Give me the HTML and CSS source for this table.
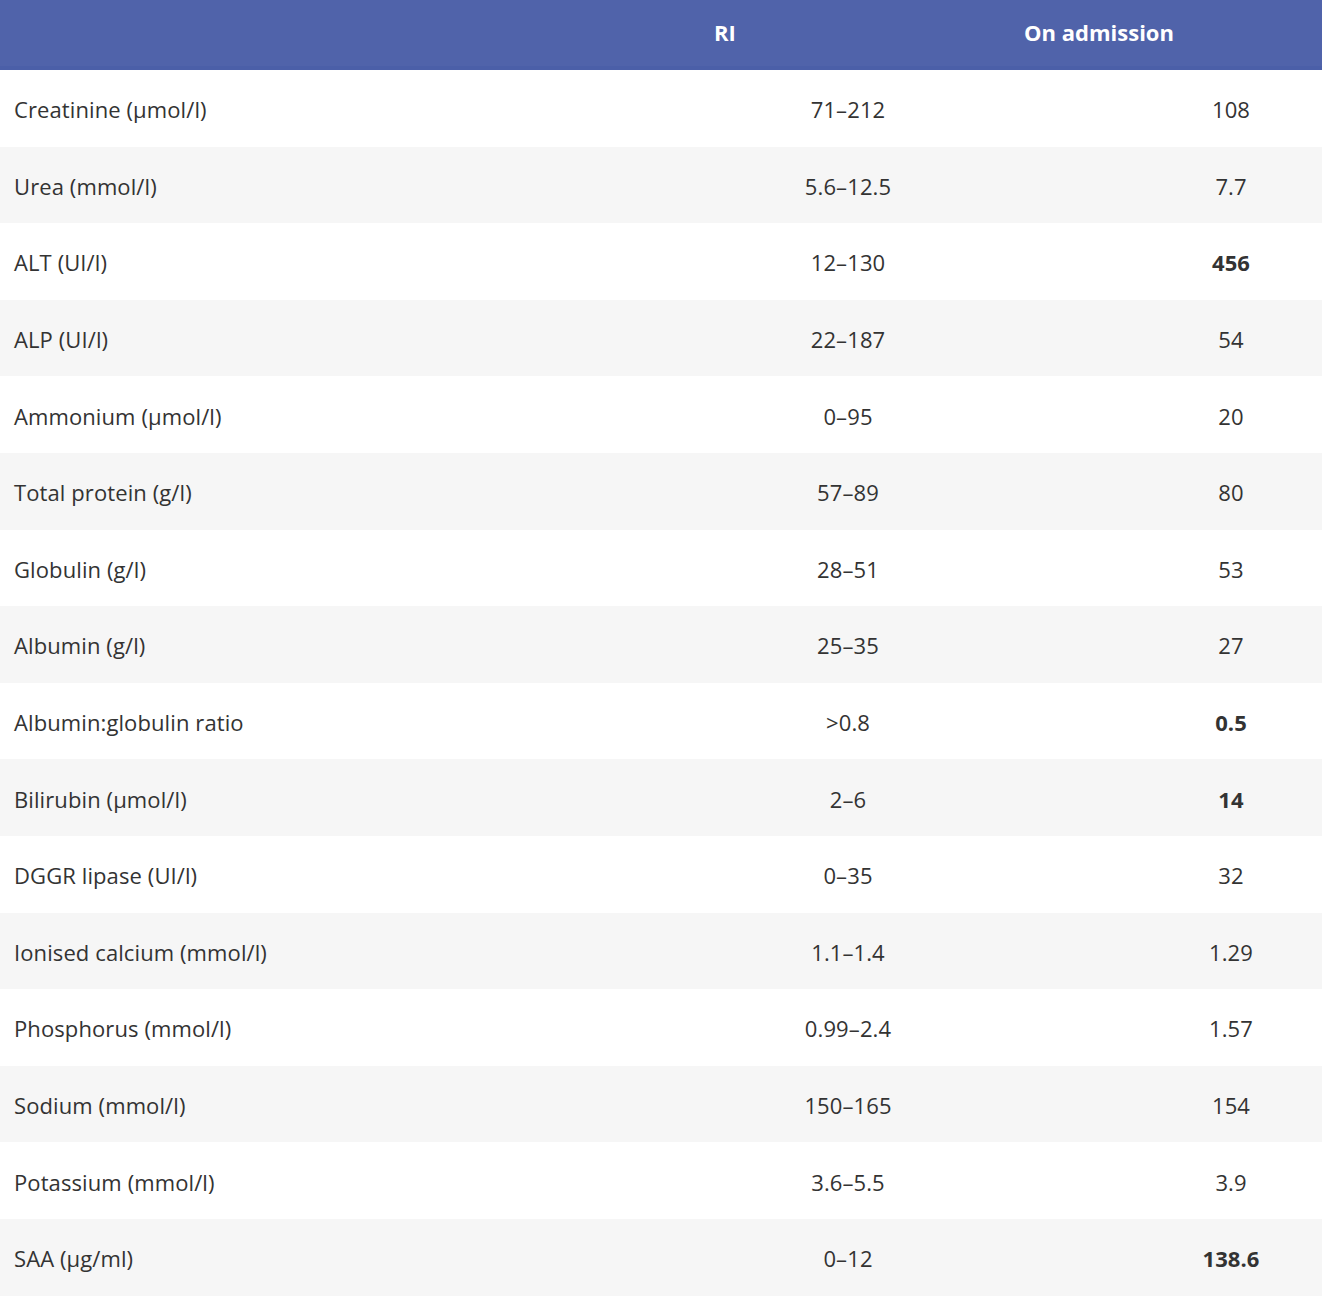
FILE: index.html
```html
<!DOCTYPE html>
<html lang="en">
<head>
<meta charset="utf-8">
<title>Biochemistry</title>
<link rel="stylesheet" href="styles.css">
</head>
<body>
<div class="table">
  <div class="head">
    <div class="hcell"></div>
    <div class="hcell">RI</div>
    <div class="hcell hlast">On admission</div>
  </div>
  <div class="row"><div class="name">Creatinine (μmol/l)</div><div class="val">71–212</div><div class="val">108</div></div>
  <div class="row"><div class="name">Urea (mmol/l)</div><div class="val">5.6–12.5</div><div class="val">7.7</div></div>
  <div class="row"><div class="name">ALT (UI/l)</div><div class="val">12–130</div><div class="val b">456</div></div>
  <div class="row"><div class="name">ALP (UI/l)</div><div class="val">22–187</div><div class="val">54</div></div>
  <div class="row"><div class="name">Ammonium (μmol/l)</div><div class="val">0–95</div><div class="val">20</div></div>
  <div class="row"><div class="name">Total protein (g/l)</div><div class="val">57–89</div><div class="val">80</div></div>
  <div class="row"><div class="name">Globulin (g/l)</div><div class="val">28–51</div><div class="val">53</div></div>
  <div class="row"><div class="name">Albumin (g/l)</div><div class="val">25–35</div><div class="val">27</div></div>
  <div class="row"><div class="name">Albumin:globulin ratio</div><div class="val">&gt;0.8</div><div class="val b">0.5</div></div>
  <div class="row"><div class="name">Bilirubin (μmol/l)</div><div class="val">2–6</div><div class="val b">14</div></div>
  <div class="row"><div class="name">DGGR lipase (UI/l)</div><div class="val">0–35</div><div class="val">32</div></div>
  <div class="row"><div class="name">Ionised calcium (mmol/l)</div><div class="val">1.1–1.4</div><div class="val">1.29</div></div>
  <div class="row"><div class="name">Phosphorus (mmol/l)</div><div class="val">0.99–2.4</div><div class="val">1.57</div></div>
  <div class="row"><div class="name">Sodium (mmol/l)</div><div class="val">150–165</div><div class="val">154</div></div>
  <div class="row"><div class="name">Potassium (mmol/l)</div><div class="val">3.6–5.5</div><div class="val">3.9</div></div>
  <div class="row"><div class="name">SAA (μg/ml)</div><div class="val">0–12</div><div class="val b">138.6</div></div>
</div>
</body>
</html>
```
FILE: styles.css
```css
html, body {
  margin: 0;
  padding: 0;
  background: #ffffff;
}
body {
  font-family: "Open Sans", "Liberation Sans", sans-serif;
  color: #333333;
}
.table {
  width: 1322px;
}
.head {
  display: grid;
  grid-template-columns: 556px 338px 1fr;
  height: 66px;
  background: #5063aa;
  border-bottom: 4px solid #4b5fa8;
  align-items: center;
}
.hcell {
  color: #ffffff;
  font-weight: 700;
  font-size: 22px;
  letter-spacing: 0;
  text-align: center;
  padding-bottom: 3px;
}
.hlast {
  padding-right: 18px;
}
.row {
  display: grid;
  grid-template-columns: 556px 584px 182px;
  height: 76.6px;
  align-items: center;
  font-size: 22px;
  letter-spacing: 0.1px;
}
.row > div {
  padding-top: 2px;
}
.row:nth-child(odd) {
  background: #f6f6f6;
}
.name {
  padding-left: 14px;
}
.val {
  text-align: center;
}
.b {
  font-weight: 700;
}
```
